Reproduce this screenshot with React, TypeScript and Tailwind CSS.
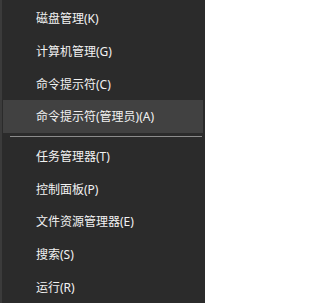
const topItems = ['磁盘管理(K)', '计算机管理(G)', '命令提示符(C)', '命令提示符(管理员)(A)'];
const bottomItems = ['任务管理器(T)', '控制面板(P)', '文件资源管理器(E)', '搜索(S)', '运行(R)'];

function MenuItem({ label, active }: { label: string; active?: boolean }) {
  return (
    <div
      className={`flex h-[33px] items-center pl-[33px] text-[12px] leading-none text-[#f2f2f2] ${
        active ? 'bg-[#414141]' : ''
      }`}
    >
      <span className="pt-[2px]">{label}</span>
    </div>
  );
}

export default function App() {
  return (
    <div
      className="flex h-[303px] w-[205px] overflow-hidden bg-[#2b2b2b]"
      style={{ fontFamily: '"Noto Sans", "Noto Sans CJK SC", sans-serif' }}
    >
      <div className="w-[2px] shrink-0 bg-[#3b3b3b]" />
      <div className="flex flex-1 flex-col pt-[2px] pl-px pr-[2px]">
        {topItems.map((item, i) => (
          <MenuItem key={item} label={item} active={i === 3} />
        ))}
        <div className="flex h-[7px] items-center pl-[7px] pr-[1px]">
          <div className="h-px w-full bg-[#8c8c8c]" />
        </div>
        {bottomItems.map((item) => (
          <MenuItem key={item} label={item} />
        ))}
      </div>
    </div>
  );
}
